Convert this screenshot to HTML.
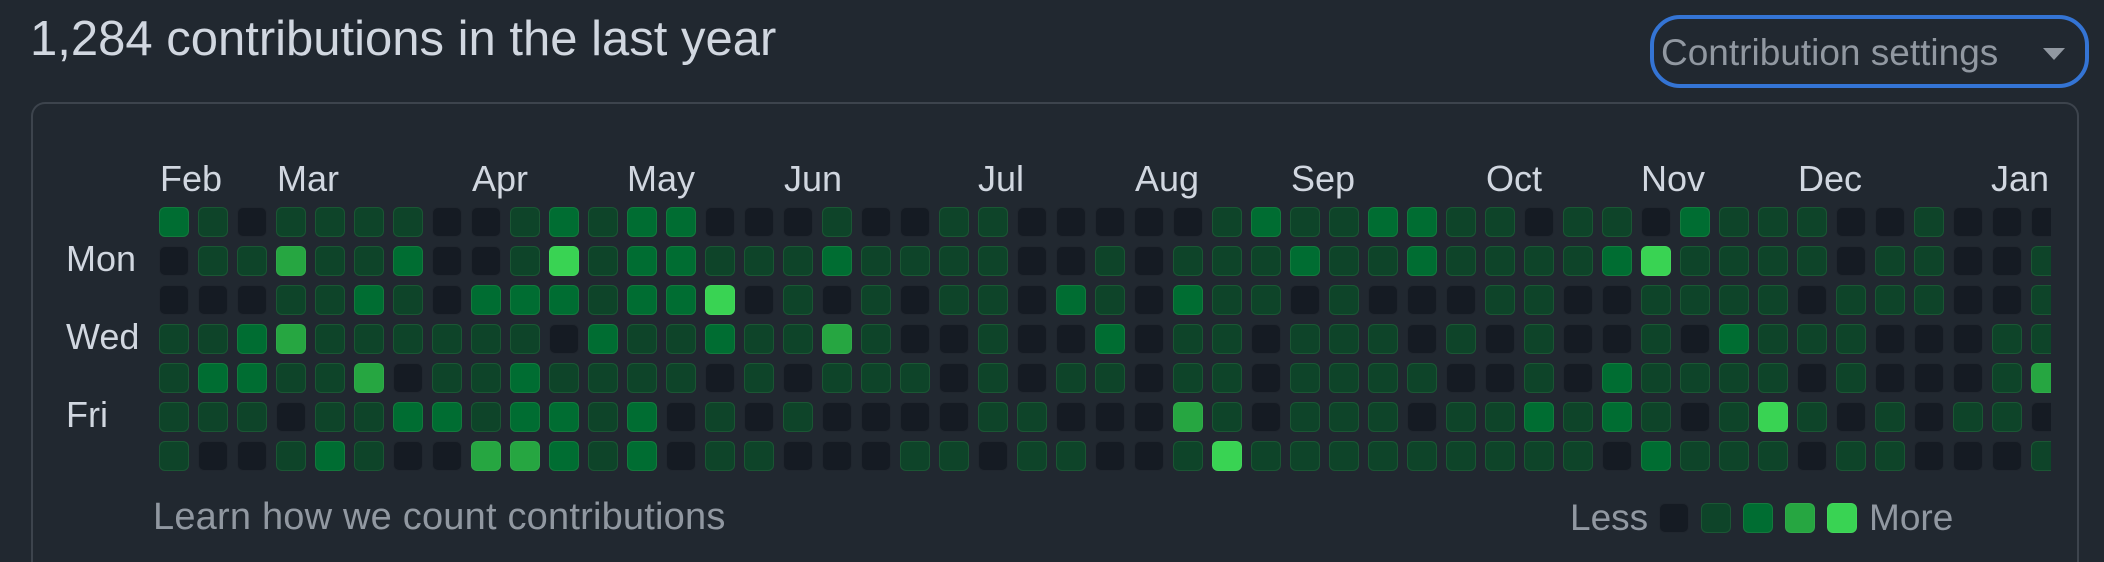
<!DOCTYPE html>
<html><head><meta charset="utf-8"><style>
html,body{margin:0;padding:0;background:#212830;width:2104px;height:562px;overflow:hidden;font-family:"Liberation Sans",sans-serif}
.t{position:absolute;white-space:nowrap}
#title{left:30px;top:11px;font-size:49px;color:#d1d7e0}
#btn{position:absolute;left:1650px;top:15px;width:431px;height:65px;border:4px solid #3474d4;border-radius:30px;box-sizing:content-box}
#btnt{left:1661px;top:32px;font-size:37px;color:#9198a1}
#box{position:absolute;left:31px;top:102px;width:2044px;height:458px;border:2px solid #3d444d;border-bottom:none;border-radius:14px 14px 0 0}
.m{font-size:36px;color:#d1d7e0;top:158px}
.d{font-size:36px;color:#d1d7e0;left:66px}
#grid{position:absolute;left:159px;top:207px;width:1892px;height:270px;overflow:hidden}
.c{position:absolute;width:28px;height:28px;border-radius:6px;border:1px solid rgba(255,255,255,0.05)}
.l0{background:#151b23}.l1{background:#0e4429;border-color:#1b5634}.l2{background:#006d32;border-color:#14793d}.l3{background:#26a641}.l4{background:#39d353}
.muted{color:#9198a1;font-size:37px;top:497px}
</style></head><body>
<div class="t" id="title">1,284 contributions in the last year</div>
<div id="btn"></div>
<div class="t" id="btnt">Contribution settings</div>
<svg style="position:absolute;left:2040px;top:46px" width="28" height="16"><polygon points="3,2 25,2 14,14" fill="#9198a1"/></svg>
<div id="box"></div>
<div class="t m" style="left:160px">Feb</div>
<div class="t m" style="left:277px">Mar</div>
<div class="t m" style="left:472px">Apr</div>
<div class="t m" style="left:627px">May</div>
<div class="t m" style="left:784px">Jun</div>
<div class="t m" style="left:978px">Jul</div>
<div class="t m" style="left:1135px">Aug</div>
<div class="t m" style="left:1291px">Sep</div>
<div class="t m" style="left:1486px">Oct</div>
<div class="t m" style="left:1641px">Nov</div>
<div class="t m" style="left:1798px">Dec</div>
<div class="t m" style="left:1991px">Jan</div>
<div class="t d" style="top:238px">Mon</div>
<div class="t d" style="top:316px">Wed</div>
<div class="t d" style="top:394px">Fri</div>
<div id="grid"></div>
<div class="t muted" style="left:153px;font-size:38px;letter-spacing:0.2px;top:496px">Learn how we count contributions</div>
<div class="t muted" style="left:1570px">Less</div>
<div class="c l0" style="left:1659px;top:503px"></div>
<div class="c l1" style="left:1701px;top:503px"></div>
<div class="c l2" style="left:1743px;top:503px"></div>
<div class="c l3" style="left:1785px;top:503px"></div>
<div class="c l4" style="left:1827px;top:503px"></div>
<div class="t muted" style="left:1869px">More</div>
<script>
var rows=[
"2101111001212"+"200010011000"+"001211221101"+"102111001000",
"0113112001412"+"211121111001"+"011121121111"+"241111011001",
"0001121022212"+"240101011021"+"021101000110"+"011110111001",
"1123111111021"+"121131001002"+"011011101010"+"010211100011",
"1221130112111"+"101011101011"+"011011110010"+"211110100013",
"1110112212212"+"010100001100"+"031011101121"+"210141010110",
"1001210033212"+"011000110110"+"014111111111"+"021110110001"];
var g=document.getElementById('grid'),h='';
for(var r=0;r<7;r++)for(var c=0;c<49;c++){var v=rows[r][c]||'0';h+='<div class="c l'+v+'" style="left:'+(c*39)+'px;top:'+(r*39)+'px"></div>';}
g.innerHTML=h;
</script>
</body></html>
